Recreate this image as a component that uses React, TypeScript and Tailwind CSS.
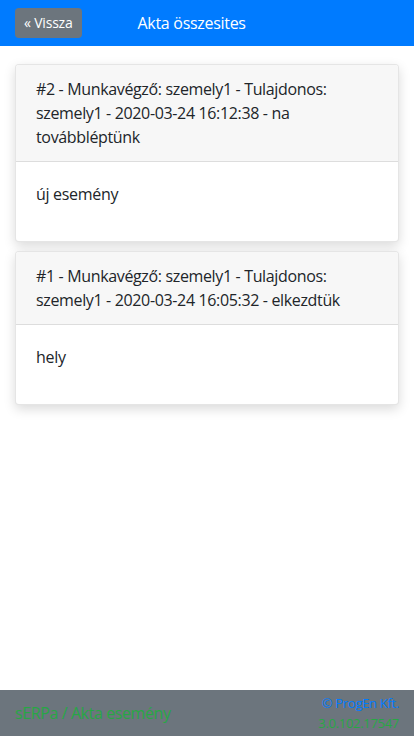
export default function App() {
  const events = [
    {
      head: '#2 - Munkavégző: szemely1 - Tulajdonos: szemely1 - 2020-03-24 16:12:38 - na továbbléptünk',
      body: 'új esemény',
    },
    {
      head: '#1 - Munkavégző: szemely1 - Tulajdonos: szemely1 - 2020-03-24 16:05:32 - elkezdtük',
      body: 'hely',
    },
  ]

  return (
    <div className="flex flex-col h-[736px] bg-white text-[#212529] font-['Open_Sans',sans-serif]">
      {/* Top bar */}
      <div className="flex items-center h-[46px] bg-[#007bff] px-[15px] shrink-0">
        <button className="h-[30px] px-[9px] rounded-[4px] bg-[#6c757d] text-white text-[14px] leading-none tracking-[-0.2px]">
          « Vissza
        </button>
        <span className="ml-[56px] text-white text-[16px] tracking-[-0.3px]">Akta összesites</span>
      </div>

      {/* Cards */}
      <div className="flex-1 px-[15px] pt-[18px] flex flex-col gap-[9px]">
        {events.map((e, i) => (
          <div key={i} className="rounded-[4px] border border-black/10 bg-white shadow-[0_4px_12px_rgba(0,0,0,0.15)] overflow-hidden">
            <div className="bg-[#f7f7f7] border-b border-black/10 px-[20px] py-[12px] text-[16px] leading-[24px] tracking-[-0.35px]">
              {e.head}
            </div>
            <div className="px-[20px] pt-[20px] pb-[19px]">
              <p className="mb-[16px] text-[16px] leading-[24px] tracking-[-0.3px]">{e.body}</p>
            </div>
          </div>
        ))}
      </div>

      {/* Footer */}
      <div className="flex items-center justify-between h-[46px] bg-[#6c757d] px-[15px] shrink-0">
        <span className="text-[#28a745] text-[16px] tracking-[-0.4px]">sERPa / Akta esemény</span>
        <div className="flex flex-col items-end text-[13px] leading-[20px] tracking-[-0.3px]">
          <span className="text-[#007bff]">© ProgEn Kft.</span>
          <span className="text-[#28a745]">3.0.102.17547</span>
        </div>
      </div>
    </div>
  )
}
